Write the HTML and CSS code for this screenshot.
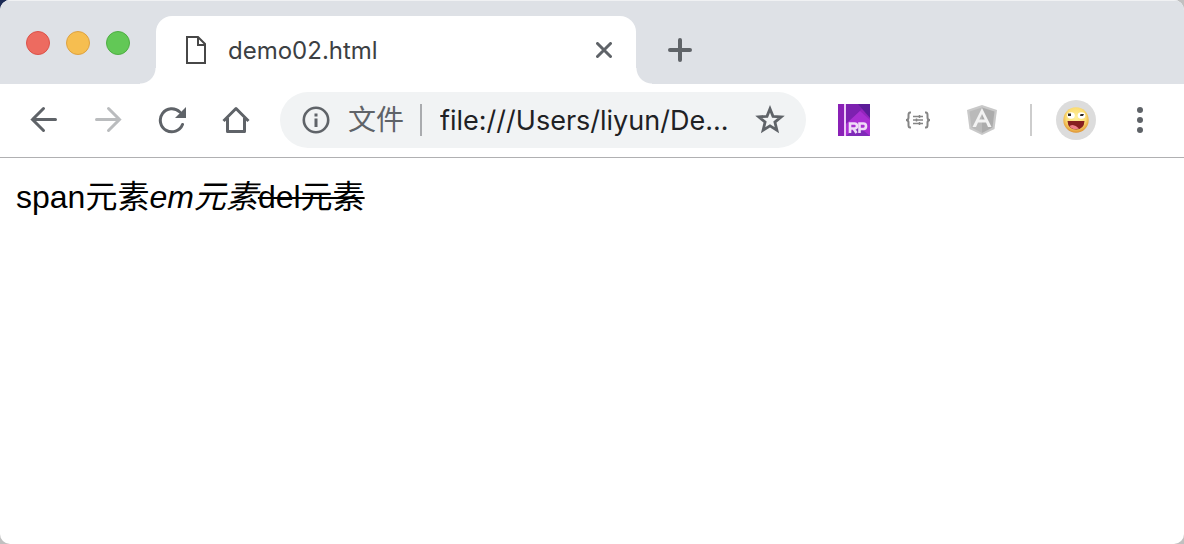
FILE: index.html
```html
<!DOCTYPE html>
<html lang="zh-CN">
<head>
<meta charset="utf-8">
<title>demo02.html</title>
<link rel="stylesheet" href="styles.css">
</head>
<body>
<div class="window">
  <header class="tabstrip">
    <div class="lights">
      <button class="light light-close" aria-label="Close window"></button>
      <button class="light light-min" aria-label="Minimize window"></button>
      <button class="light light-max" aria-label="Zoom window"></button>
    </div>
    <div class="tab">
      <svg class="page-icon" width="20" height="28" viewBox="0 0 20 28" fill="none" stroke="#474747" stroke-width="2"><path d="M1 1H12L19 8V27H1Z"/><path d="M12 1V9H19" /></svg>
      <span class="tab-title">demo02.html</span>
      <button class="icon-btn tab-close" aria-label="Close tab"><svg width="16" height="16" viewBox="0 0 16 16" stroke="#5f6368" stroke-width="3" stroke-linecap="round"><path d="M1.5 1.5L14.5 14.5M14.5 1.5L1.5 14.5"/></svg></button>
    </div>
    <button class="icon-btn new-tab" aria-label="New tab"><svg width="24" height="24" viewBox="0 0 24 24" stroke="#5f6368" stroke-width="4" stroke-linecap="round"><path d="M12 2V22M2 12H22"/></svg></button>
  </header>
  <nav class="toolbar">
    <div class="nav-buttons">
      <button class="icon-btn nav-btn" aria-label="Back"><svg width="28" height="28" viewBox="0 0 28 28" fill="none" stroke="#5f6368" stroke-width="3" stroke-linecap="round"><path d="M25.500 13.500H2.500M13.500 2.500L2.500 13.500L13.500 24.500"/></svg></button>
      <button class="icon-btn nav-btn" aria-label="Forward"><svg width="28" height="28" viewBox="0 0 28 28" fill="none" stroke="#babcbe" stroke-width="3" stroke-linecap="round"><path d="M2.500 13.500H25.500M14.500 2.500L25.500 13.500L14.500 24.500"/></svg></button>
      <button class="icon-btn nav-btn" aria-label="Reload"><svg width="28" height="28" viewBox="0 0 28 28"><path d="M24.500 18.500A11.500 11.500 0 1 1 21.800 6" fill="none" stroke="#5f6368" stroke-width="3" stroke-linecap="round"/><path d="M28 1V12H17Z" fill="#5f6368"/></svg></button>
      <button class="icon-btn nav-btn" aria-label="Home"><svg width="28" height="28" viewBox="0 0 28 28" fill="none" stroke="#5f6368" stroke-width="3"><path d="M1.500 15L14 2.500L26.500 15M5.500 12V25.500H22.500V12" stroke-linejoin="round"/></svg></button>
    </div>
    <div class="omnibox">
      <button class="site-info" aria-label="文件"><svg width="28" height="28" viewBox="0 0 28 28"><circle cx="14" cy="14" r="12.200" fill="none" stroke="#5f6368" stroke-width="2.600"/><path d="M12.500 7.500h3v3h-3zM12.500 12.500h3v8.500h-3z" fill="#5f6368"/></svg><span>文件</span></button>
      <input class="url" type="text" aria-label="Address" value="file:///Users/liyun/De..." spellcheck="false">
      <button class="icon-btn star" aria-label="Bookmark"><svg width="30" height="30" viewBox="0 0 30 30"><path d="M15 3.800L18 11.300L26.200 11.900L19.900 17.100L21.900 25.200L15 20.800L8.100 25.200L10.100 17.100L3.800 11.900L12 11.300Z" fill="none" stroke="#5f6368" stroke-width="2.800"/></svg></button>
    </div>
    <div class="extensions">
      <button class="icon-btn nav-btn" aria-label="Axure RP"><svg width="32" height="32" viewBox="0 0 32 32"><path d="M0 0H32V32H0Z" fill="#9425bd"/><path d="M8 0H32V12L24 5L8 20Z" fill="#7d21b0"/><path d="M20 0H32V14Z" fill="#5c1c98"/><path d="M8 20L22 7L32 16V32H8Z" fill="#a92fd2"/><path d="M8 32L20 22L32 32Z" fill="#7f2ab8"/><path d="M0 0H6V32H0Z" fill="#8a20b6"/><path d="M6 0H8V32H6Z" fill="#ecc9f7"/><g fill="none" stroke="#efdcf7" stroke-width="2.600"><path d="M12 29V19.500H16.500Q19 19.500 19 22T16.500 24.500H12M15.500 24.500L18.500 29"/><path d="M21.500 29V19.500H25.500Q28 19.500 28 22.200T25.500 25H21.500"/></g></svg></button>
      <button class="icon-btn nav-btn" aria-label="JSON formatter"><svg width="26" height="18" viewBox="0 0 26 18" fill="none" stroke="#858585"><path d="M6 1.500H5Q3.500 1.500 3.500 4V6.500Q3.500 9 1 9Q3.500 9 3.500 11.500V14Q3.500 16.500 5 16.500H6M20 1.500H21Q22.500 1.500 22.500 4V6.500Q22.500 9 25 9Q22.500 9 22.500 11.500V14Q22.500 16.500 21 16.500H20" stroke-width="2"/><path d="M8 5.500H18M8 9H18M8 12.500H18" stroke-width="1.300"/><path d="M14.500 4V7M11.500 7.500V10.500M14.500 11V14" stroke-width="1.500"/></svg></button>
      <button class="icon-btn nav-btn" aria-label="Angular"><svg width="30" height="32" viewBox="0 0 30 32"><path d="M15 1L30 6L27.500 25L15 31L2.500 25L0 6Z" fill="#c9c9c9"/><path d="M15 3.500L27.500 7.500L25.500 23.500L15 29Z" fill="#acacac"/><path d="M15 3.500L2.500 7.500L4.500 23.500L15 29Z" fill="#bababa"/><path d="M15 4L5.500 23H9L11 18.500H19L21 23H24.500ZM15 10L17.700 15.500H12.300Z" fill="#f3f3f3" fill-rule="evenodd"/></svg></button>
    </div>
    <div class="profile">
      <button class="avatar" aria-label="Profile"><svg width="26" height="26" viewBox="0 0 26 26"><defs><radialGradient id="face" cx="50%" cy="40%" r="60%"><stop offset="0" stop-color="#fff09b"/><stop offset=".65" stop-color="#fbdc72"/><stop offset="1" stop-color="#df9331"/></radialGradient></defs><circle cx="13" cy="13" r="12.700" fill="url(#face)"/><ellipse cx="8" cy="8.500" rx="3.800" ry="3.300" fill="#fff"/><ellipse cx="18.500" cy="8.500" rx="3.800" ry="3.300" fill="#fff"/><path d="M5 6.500H8V9H5ZM17.500 7H21L20 9H17Z" fill="#302a24"/><path d="M4.500 14H21.500Q21 22.500 13 22.500Q5 22.500 4.500 14Z" fill="#861f20"/><path d="M6.500 19Q11 16 16 21.500Q10 24 6.500 19Z" fill="#ee7f88"/></svg></button>
      <button class="icon-btn menu" aria-label="Menu"><svg width="6" height="26" viewBox="0 0 6 26" fill="#5f6368"><circle cx="3" cy="3" r="3"/><circle cx="3" cy="13" r="3"/><circle cx="3" cy="23" r="3"/></svg></button>
    </div>
  </nav>
  <main class="content"><span>span元素</span><em>em元素</em><del>del元素</del></main>
</div>
</body>
</html>
```
FILE: styles.css
```css
* {
  box-sizing: border-box;
}

body {
  margin: 0;
  background: linear-gradient(90deg, #1b2a55 0, #1b2a55 12px, #c0c0c0 12px) top / 100% 12px no-repeat #c0c0c0;
  font-family: Inter, "Noto Sans CJK SC", sans-serif;
}

button {
  margin: 0;
  padding: 0;
  border: 0;
  background: none;
  font: inherit;
}

svg {
  display: block;
  flex: none;
}

.window {
  display: flex;
  flex-direction: column;
  min-height: 100vh;
  border-radius: 10px;
  background: #fff;
  overflow: hidden;
}

.tabstrip {
  display: flex;
  padding-top: 16px;
  background: #dee1e6;
  box-shadow: inset 0 1px #f0f1f3;
}

.lights {
  display: flex;
  gap: 16px;
  padding: 15px 26px 0;
}

.light {
  width: 24px;
  height: 24px;
  border: 1px solid;
  border-radius: 50%;
}

.light-close {
  background: #ed6b60;
  border-color: #dc5249;
}

.light-min {
  background: #f6be50;
  border-color: #dea241;
}

.light-max {
  background: #62c856;
  border-color: #4eae43;
}

.tab {
  position: relative;
  display: flex;
  align-items: center;
  flex: 0 1 480px;
  height: 68px;
  padding: 0 24px 0 30px;
  border-radius: 16px 16px 0 0;
  background: #fff;
}

.tab::before,
.tab::after {
  content: "";
  position: absolute;
  bottom: 0;
  width: 16px;
  height: 16px;
}

.tab::before {
  right: 100%;
  background: radial-gradient(circle at 0 0, #dee1e6 15px, #fff 16px);
}

.tab::after {
  left: 100%;
  background: radial-gradient(circle at 100% 0, #dee1e6 15px, #fff 16px);
}

.tab-title {
  flex: 1;
  padding-left: 22px;
  font-size: 24px;
  color: #3c4043;
}

.icon-btn {
  display: flex;
  align-items: center;
  justify-content: center;
}

.new-tab {
  padding: 0 32px;
}

.toolbar {
  display: flex;
  align-items: center;
  padding: 8px 16px 9px 12px;
  border-bottom: 1px solid #b0b0b2;
}

.nav-buttons,
.extensions {
  display: flex;
}

.nav-btn {
  width: 64px;
  height: 56px;
}

.omnibox {
  display: flex;
  align-items: center;
  flex: 1;
  min-width: 0;
  height: 56px;
  margin: 0 16px 0 12px;
  padding: 0 21px 0 22px;
  border-radius: 28px;
  background: #f1f3f4;
}

.site-info {
  display: flex;
  align-items: center;
  gap: 18px;
  height: 32px;
  padding-right: 16px;
  border-right: 2px solid #a9abae;
  font-size: 28px;
  line-height: 32px;
  color: #5f6368;
}

.url {
  flex: 1;
  min-width: 0;
  padding: 0 0 0 18px;
  border: 0;
  outline: 0;
  background: none;
  font: 27px Inter, sans-serif;
  color: #202124;
}

.profile {
  display: flex;
  align-items: center;
  margin-left: 16px;
  padding-left: 26px;
  position: relative;
}

.profile::before {
  content: "";
  position: absolute;
  left: 0;
  width: 2px;
  height: 32px;
  background: #cdcdcd;
}

.avatar {
  display: flex;
  align-items: center;
  justify-content: center;
  width: 40px;
  height: 40px;
  border-radius: 50%;
  background: #dcdcdc;
}

.menu {
  width: 56px;
  height: 40px;
  margin-left: 16px;
}

.content {
  padding: 16px;
  font: 32px/46px "Liberation Sans", "Noto Sans CJK SC", sans-serif;
  color: #000;
}

.content del {
  text-decoration-thickness: 2px;
}
```
